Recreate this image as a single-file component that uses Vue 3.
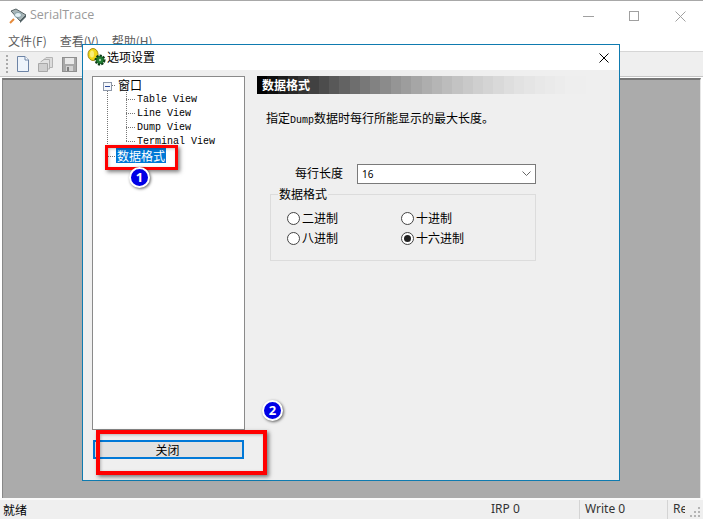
<script setup>
const menus = ['文件(F)', '查看(V)', '帮助(H)']
const views = ['Table View', 'Line View', 'Dump View', 'Terminal View']
const radios = [
  { label: '二进制', on: false },
  { label: '十进制', on: false },
  { label: '八进制', on: false },
  { label: '十六进制', on: true }
]
const steps = Array.from({ length: 32 }, (_, i) => {
  const v = Math.round(238 * (1 - Math.pow(1 - i / 31, 1.8)))
  return `rgb(${v},${v},${v})`
})
</script>

<template>
  <div class="screen">
    <header class="titlebar">
      <div class="app-title">
        <svg class="app-icon" width="18" height="16" viewBox="0 0 18 16">
          <path d="M2 3 L7 1 L17 7 L11 13 Z" fill="#a9b6b8" stroke="#566264" stroke-width="1" />
          <path d="M11 13 L17 7 L17 9 L11 15 Z" fill="#4f5f62" />
          <ellipse cx="9" cy="7" rx="3.5" ry="2.5" fill="#e4f0f4" stroke="#6d8a92" stroke-width=".7" />
          <path d="M1 15 L5 11" stroke="#e68a3a" stroke-width="2" />
        </svg>
        <span>SerialTrace</span>
      </div>
      <div class="win-controls">
        <svg width="11" height="11" viewBox="0 0 11 11"><path d="M0 5.5H11" stroke="#a0a0a0" /></svg>
        <svg width="11" height="11" viewBox="0 0 11 11"><rect x=".5" y=".5" width="9" height="9" fill="none" stroke="#a0a0a0" /></svg>
        <svg width="11" height="11" viewBox="0 0 11 11"><path d="M.5 .5L10.5 10.5M10.5 .5L.5 10.5" stroke="#a0a0a0" /></svg>
      </div>
    </header>

    <nav class="menubar">
      <span v-for="m in menus" :key="m" class="menu-item">{{ m }}</span>
    </nav>

    <div class="toolbar">
      <span class="grip"></span>
      <svg width="14" height="16" viewBox="0 0 14 16">
        <path d="M1.5 .5H9L12.5 4V15.5H1.5Z" fill="#eef4fb" stroke="#6d84a6" />
        <path d="M9 .5V4H12.5" fill="#fff" stroke="#6d84a6" />
      </svg>
      <svg width="15" height="15" viewBox="0 0 15 15">
        <path d="M5 3.5L8 .5H14.5V10.5H12" fill="#dcdcdc" stroke="#b4b4b4" />
        <path d="M2.5 5L6 2.5H11.5V12H9" fill="#e2e2e2" stroke="#b0b0b0" />
        <path d="M.5 6.5H9.5V14.5H.5Z" fill="#cfcfcf" stroke="#a8a8a8" />
      </svg>
      <svg class="save" width="15" height="15" viewBox="0 0 15 15">
        <rect x=".5" y=".5" width="14" height="14" fill="#a8a8a8" stroke="#8f8f8f" />
        <rect x="3" y="1" width="9" height="6" fill="#e9e9e9" />
        <rect x="4" y="9" width="7" height="5" fill="#d2d2d2" />
        <rect x="5" y="10" width="2" height="4" fill="#7f7f7f" />
      </svg>
    </div>

    <main class="client"></main>

    <footer class="statusbar">
      <span class="status-main">就绪</span>
      <span class="pane pane-irp">IRP 0</span>
      <span class="pane pane-write">Write 0</span>
      <span class="pane pane-re">Re</span>
      <svg class="size-grip" width="11" height="11" viewBox="0 0 11 11" fill="#b4b4b4">
        <rect x="8" y="0" width="2" height="2" />
        <rect x="4" y="4" width="2" height="2" />
        <rect x="8" y="4" width="2" height="2" />
        <rect x="0" y="8" width="2" height="2" />
        <rect x="4" y="8" width="2" height="2" />
        <rect x="8" y="8" width="2" height="2" />
      </svg>
    </footer>

    <section class="dialog">
      <div class="dlg-title">
        <svg width="20" height="18" viewBox="0 0 20 18">
          <ellipse cx="7" cy="6.5" rx="5" ry="6" fill="#f2d818" stroke="#a38c10" />
          <ellipse cx="6" cy="6" rx="2" ry="3.5" fill="#f9ee7a" />
          <circle cx="14" cy="12" r="4" fill="#1c6a2a" stroke="#0d3d17" stroke-width="3" stroke-dasharray="2 1" />
          <circle cx="14" cy="12" r="3.5" fill="#1f7a30" />
          <circle cx="14" cy="12" r="1.2" fill="#a8d0ac" />
        </svg>
        <span class="dlg-name">选项设置</span>
        <svg class="dlg-close" width="10" height="10" viewBox="0 0 10 10">
          <path d="M.5 .5L9.5 9.5M9.5 .5L.5 9.5" stroke="#000" />
        </svg>
      </div>

      <div class="dlg-body">
        <div class="left">
          <div class="tree">
            <svg class="guides" width="100" height="90" viewBox="0 0 100 90">
              <g stroke="#777" stroke-dasharray="1 1" fill="none">
                <path d="M14.5 14V79" />
                <path d="M33.5 15V65" />
                <path d="M19 8.5H23" />
                <path d="M33 22.5H43" />
                <path d="M33 36.5H43" />
                <path d="M33 50.5H43" />
                <path d="M33 64.5H43" />
                <path d="M15 79.5H23" />
              </g>
              <rect x="10.5" y="5.5" width="8" height="8" fill="#f4f6fa" stroke="#8d97a8" />
              <path d="M12 9.5H17" stroke="#2b4a9c" />
            </svg>
            <div class="node root">窗口</div>
            <div v-for="v in views" :key="v" class="node leaf">{{ v }}</div>
            <div class="node last"><span class="selected">数据格式</span></div>
          </div>
          <button class="close-btn" type="button">关闭</button>
        </div>

        <div class="right">
          <div class="banner">
            <span v-for="(c, i) in steps" :key="i" class="step" :style="{ background: c }"></span>
            <span class="banner-text">数据格式</span>
          </div>
          <p class="hint">指定<span class="mono">Dump</span>数据时每行所能显示的最大长度。</p>
          <div class="field">
            <span class="field-label">每行长度</span>
            <div class="combo">
              <span>16</span>
              <svg width="9" height="5" viewBox="0 0 9 5"><path d="M.5 .5L4.5 4.5L8.5 .5" fill="none" stroke="#666" /></svg>
            </div>
          </div>
          <fieldset class="group">
            <legend>数据格式</legend>
            <div class="radios">
              <label v-for="r in radios" :key="r.label" class="radio">
                <span class="dot" :class="{ on: r.on }"></span>{{ r.label }}
              </label>
            </div>
          </fieldset>
        </div>
      </div>
    </section>

    <div class="mark mark-tree"></div>
    <div class="mark mark-btn"></div>
    <span class="badge badge-one">1</span>
    <span class="badge badge-two">2</span>
  </div>
</template>

<style>
html, body { margin: 0; padding: 0; background: #fff; }
</style>

<style scoped>
.screen {
  position: relative;
  width: 703px;
  height: 519px;
  overflow: hidden;
  display: flex;
  flex-direction: column;
  box-sizing: border-box;
  border-top: 1px solid #a8a8a8;
  background: #fff;
  font: 12px "Noto Sans CJK SC", sans-serif;
  color: #000;
}
.titlebar {
  height: 32px;
  flex: none;
  display: flex;
  justify-content: space-between;
  align-items: center;
  padding: 0 17px 2px 9px;
  box-sizing: border-box;
}
.app-title {
  display: flex;
  align-items: center;
  gap: 3px;
  font: 12.5px "Open Sans", sans-serif;
  color: #9a9a9a;
  line-height: 14px;
}
.app-title span { position: relative; top: -1px; }
.win-controls { display: flex; gap: 35px; }
.menubar {
  height: 18px;
  flex: none;
  display: flex;
  gap: 13px;
  padding: 0 0 2px 8px;
  box-sizing: border-box;
  align-items: center;
  color: #5c5c5c;
  line-height: 16px;
}
.toolbar {
  height: 26px;
  flex: none;
  display: flex;
  align-items: center;
  gap: 8px;
  padding-left: 6px;
  background: #efefef;
  border-top: 1px solid #d6d6d6;
  border-bottom: 1px solid #c6c6c6;
  box-sizing: border-box;
}
.grip {
  width: 2px;
  height: 18px;
  background: repeating-linear-gradient(#aaa 0 2px, transparent 2px 4px);
}
.save { margin-left: 1px; }
.client {
  flex: 1;
  margin: 1px 2px 0;
  background: #ababab;
  border-top: 2px solid #777;
  border-left: 1px solid #888;
  border-right: 1px solid #e6e6e6;
}
.statusbar {
  height: 21px;
  flex: none;
  position: relative;
  display: flex;
  align-items: center;
  background: #efefef;
  border-top: 2px solid #fafafa;
  box-sizing: border-box;
  font: 12px "Noto Sans", "Noto Sans CJK SC", sans-serif;
  color: #333;
}
.status-main { width: 491px; padding-left: 3px; box-sizing: border-box; flex: none; color: #000; }
.pane { flex: none; box-sizing: border-box; height: 100%; line-height: 17px; white-space: nowrap; overflow: hidden; }
.pane-irp { width: 89px; border-right: 1px solid #d4d4d4; }
.pane-write { width: 88px; padding-left: 5px; border-right: 1px solid #d4d4d4; }
.pane-re { width: 17px; padding-left: 5px; }
.size-grip { position: absolute; right: 2px; bottom: 1px; }

.dialog {
  position: absolute;
  left: 82px;
  top: 43px;
  width: 538px;
  height: 437px;
  box-sizing: border-box;
  border: 1px solid #0f7bb0;
  background: #efefef;
  display: flex;
  flex-direction: column;
}
.dlg-title {
  height: 25px;
  flex: none;
  background: #fff;
  display: flex;
  align-items: center;
  padding: 0 10px 2px 3px;
  box-sizing: border-box;
  gap: 1px;
}
.dlg-name { flex: 1; font-size: 12px; }
.dlg-close { position: relative; top: 1px; }
.dlg-body { flex: 1; display: flex; padding: 6px 0 0 9px; gap: 12px; }
.left { width: 153px; flex: none; }
.tree {
  position: relative;
  height: 354px;
  box-sizing: border-box;
  background: #fff;
  border: 1px solid #8a8a8a;
  padding-top: 1px;
}
.guides { position: absolute; left: 0; top: 0; }
.node { position: relative; height: 14px; line-height: 14px; white-space: nowrap; }
.root { padding-left: 25px; }
.leaf { padding-left: 44px; font: 10px/16px "Liberation Mono", monospace; color: #000; }
.last { padding-left: 23px; height: 15px; }
.selected { display: inline-block; height: 15px; line-height: 15px; padding: 0 1px; background: #0078d7; color: #fff; }
.close-btn {
  display: block;
  width: 151px;
  height: 19px;
  margin: 10px 0 0 1px;
  padding: 0 2px 0 0;
  background: #e1e1e1;
  border: 2px solid #0078d7;
  font: 12px/15px "Noto Sans CJK SC", sans-serif;
  color: #000;
}
.right { width: 329px; flex: none; }
.banner { position: relative; display: flex; height: 18px; }
.step { flex: 1; }
.banner-text { position: absolute; left: 5px; top: 0; line-height: 18px; color: #fff; font-weight: 700; }
.hint { margin: 16px 0 0 9px; line-height: 16px; }
.mono { font: 10px "Liberation Mono", monospace; }
.field { display: flex; align-items: center; margin-top: 38px; padding-left: 38px; }
.field-label { width: 62px; flex: none; line-height: 16px; position: relative; top: -1px; }
.combo {
  width: 179px;
  height: 20px;
  box-sizing: border-box;
  background: #fff;
  border: 1px solid #7a7a7a;
  display: flex;
  align-items: center;
  justify-content: space-between;
  padding: 0 4px 1px;
  font: 10px "Noto Sans", sans-serif;
}
.group {
  width: 266px;
  height: 67px;
  box-sizing: border-box;
  margin: 10px 0 0 13px;
  padding: 0 0 0 16px;
  border: 1px solid #dcdcdc;
  position: relative;
}
.group legend {
  position: absolute;
  left: 7px;
  top: -9px;
  padding: 0 1px;
  background: #efefef;
  line-height: 16px;
}
.radios {
  display: grid;
  grid-template-columns: 114px 114px;
  grid-auto-rows: 20px;
  padding-top: 12px;
}
.radio { display: flex; align-items: center; gap: 2px; }
.dot {
  width: 13px;
  height: 13px;
  box-sizing: border-box;
  border: 1px solid #444;
  border-radius: 50%;
  background: #fff;
  position: relative;
  top: 1px;
}
.dot.on::after {
  content: "";
  position: absolute;
  left: 2px;
  top: 2px;
  width: 7px;
  height: 7px;
  border-radius: 50%;
  background: #222;
}

.mark {
  position: absolute;
  box-sizing: border-box;
  border: 3px solid #f00;
  box-shadow: 2px 2px 4px rgba(0, 0, 0, .5), inset 1px 1px 3px rgba(0, 0, 0, .25);
}
.mark-tree { left: 105px; top: 144px; width: 73px; height: 25px; }
.mark-btn { left: 96px; top: 429px; width: 171px; height: 45px; border-width: 4px; }
.badge {
  position: absolute;
  width: 17px;
  height: 17px;
  border-radius: 50%;
  background: #0000e6;
  border: 2px solid #fff;
  box-shadow: 1px 1px 3px rgba(0, 0, 0, .6);
  color: #fff;
  font: 700 13px/17px "Open Sans", sans-serif;
  text-align: center;
}
.badge-one { left: 129px; top: 166px; }
.badge-two { left: 262px; top: 399px; }
</style>
